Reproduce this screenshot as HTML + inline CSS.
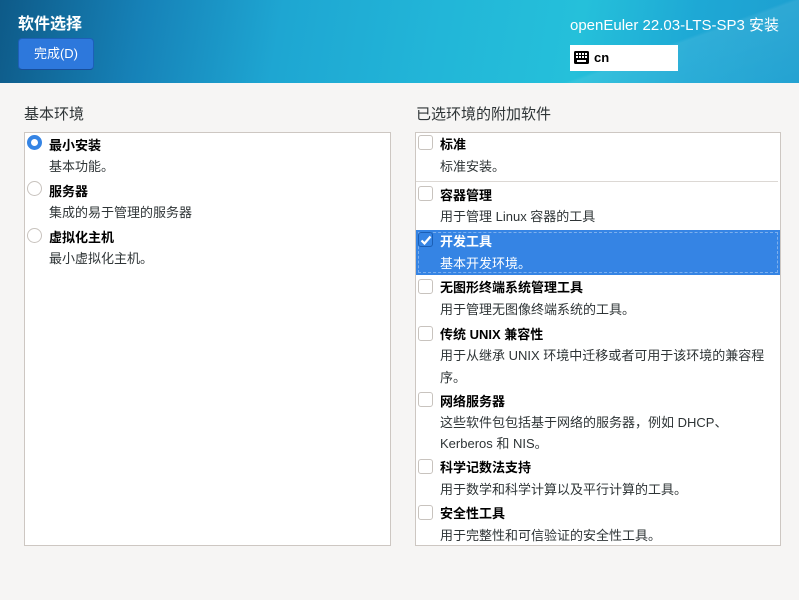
<!DOCTYPE html>
<html><head><meta charset="utf-8"><style>
*{margin:0;padding:0;box-sizing:border-box}
body{width:799px;height:600px;overflow:hidden;background:#f6f5f4;font-family:"Liberation Sans","Noto Sans CJK SC",sans-serif;font-size:13px;color:#2e3436;position:relative}
.hdr{position:absolute;left:0;top:0;width:799px;height:83px;background:linear-gradient(100deg,#0e5a88 0%,#1682b8 18%,#1ea6d2 35%,#22b6d8 55%,#25c0da 72%,#1ea8d5 86%,#1d9fd0 100%);overflow:hidden}
.t{position:absolute;white-space:nowrap;line-height:16px}
.b{font-weight:bold;color:#000}
.box{position:absolute;background:#fff;border:1px solid #cdc7c2}
.cb{position:absolute;width:15px;height:15px;border:1px solid #c8c3be;border-radius:3px;background:#fff}
.rd{position:absolute;width:15px;height:15px;border:1px solid #c8c3be;border-radius:50%;background:#fff}
</style></head><body>
<div class="hdr">
<div style="position:absolute;left:520px;top:-40px;width:400px;height:200px;background:linear-gradient(160deg,rgba(255,255,255,0) 40%,rgba(255,255,255,.08) 41%,rgba(255,255,255,0) 80%)"></div>
</div>
<div class="t" style="left:18px;top:15px;font-size:16px;font-weight:bold;color:#fff;line-height:20px">软件选择</div>
<div style="position:absolute;left:18px;top:38px;width:76px;height:32px;background:#2d78dc;border:1px solid #1d5fb8;border-bottom-color:#174e9a;border-radius:4px;color:#fff;font-size:13px;text-align:center;line-height:30px">完成(D)</div>
<div class="t" style="left:570px;top:16px;font-size:15px;color:#fff;line-height:20px">openEuler 22.03-LTS-SP3 安装</div>
<div style="position:absolute;left:570px;top:45px;width:108px;height:26px;background:#fff"></div>
<svg style="position:absolute;left:574px;top:51px" width="15" height="13" viewBox="0 0 15 13"><rect x="0" y="0" width="15" height="13" rx="1.5" fill="#000"/><g fill="#fff"><rect x="2" y="2" width="2" height="2"/><rect x="5" y="2" width="2" height="2"/><rect x="8" y="2" width="2" height="2"/><rect x="11" y="2" width="2" height="2"/><rect x="2" y="5" width="2" height="2"/><rect x="5" y="5" width="2" height="2"/><rect x="8" y="5" width="2" height="2"/><rect x="11" y="5" width="2" height="2"/><rect x="3" y="9" width="9" height="2"/></g></svg>
<div class="t b" style="left:594px;top:50px">cn</div>

<div class="t" style="left:24px;top:105px;font-size:15px;line-height:20px">基本环境</div>
<div class="t" style="left:416px;top:105px;font-size:15px;line-height:20px">已选环境的附加软件</div>

<div class="box" style="left:24px;top:132px;width:367px;height:414px"></div>
<div class="rd" style="left:27px;top:135px;border:4px solid #3584e4;"></div>
<div class="t b" style="left:49px;top:138px">最小安装</div>
<div class="t" style="left:49px;top:159px">基本功能。</div>
<div class="rd" style="left:27px;top:181px"></div>
<div class="t b" style="left:49px;top:184px">服务器</div>
<div class="t" style="left:49px;top:205px">集成的易于管理的服务器</div>
<div class="rd" style="left:27px;top:228px"></div>
<div class="t b" style="left:49px;top:230px">虚拟化主机</div>
<div class="t" style="left:49px;top:251px">最小虚拟化主机。</div>

<div class="box" style="left:415px;top:132px;width:366px;height:414px"></div>
<div style="position:absolute;left:416px;top:181px;width:362px;height:1px;background:#dcd8d4"></div>
<div style="position:absolute;left:416px;top:230px;width:364px;height:45px;background:#3584e4"></div>
<div style="position:absolute;left:418px;top:232px;width:360px;height:41px;border:1px dashed rgba(255,255,255,.35)"></div>

<div class="cb" style="left:418px;top:135px"></div>
<div class="t b" style="left:440px;top:137px">标准</div>
<div class="t" style="left:440px;top:159px">标准安装。</div>
<div class="cb" style="left:418px;top:186px"></div>
<div class="t b" style="left:440px;top:188px">容器管理</div>
<div class="t" style="left:440px;top:209px">用于管理 Linux 容器的工具</div>
<div class="cb" style="left:418px;top:232px;border-color:#1b5fb5;background:#3584e4"></div>
<svg style="position:absolute;left:420px;top:234px" width="12" height="12" viewBox="0 0 12 12"><path d="M1.5 6.5 L4.5 9.5 L10.5 2.5" stroke="#fff" stroke-width="2.2" fill="none"/></svg>
<div class="t b" style="left:440px;top:234px;color:#fff">开发工具</div>
<div class="t" style="left:440px;top:256px;color:#fff">基本开发环境。</div>
<div class="cb" style="left:418px;top:279px"></div>
<div class="t b" style="left:440px;top:280px">无图形终端系统管理工具</div>
<div class="t" style="left:440px;top:302px">用于管理无图像终端系统的工具。</div>
<div class="cb" style="left:418px;top:326px"></div>
<div class="t b" style="left:440px;top:327px">传统 UNIX 兼容性</div>
<div class="t" style="left:440px;top:348px">用于从继承 UNIX 环境中迁移或者可用于该环境的兼容程</div>
<div class="t" style="left:440px;top:370px">序。</div>
<div class="cb" style="left:418px;top:392px"></div>
<div class="t b" style="left:440px;top:394px">网络服务器</div>
<div class="t" style="left:440px;top:415px">这些软件包包括基于网络的服务器，例如 DHCP、</div>
<div class="t" style="left:440px;top:436px">Kerberos 和 NIS。</div>
<div class="cb" style="left:418px;top:459px"></div>
<div class="t b" style="left:440px;top:460px">科学记数法支持</div>
<div class="t" style="left:440px;top:482px">用于数学和科学计算以及平行计算的工具。</div>
<div class="cb" style="left:418px;top:505px"></div>
<div class="t b" style="left:440px;top:506px">安全性工具</div>
<div class="t" style="left:440px;top:528px">用于完整性和可信验证的安全性工具。</div>
</body></html>
